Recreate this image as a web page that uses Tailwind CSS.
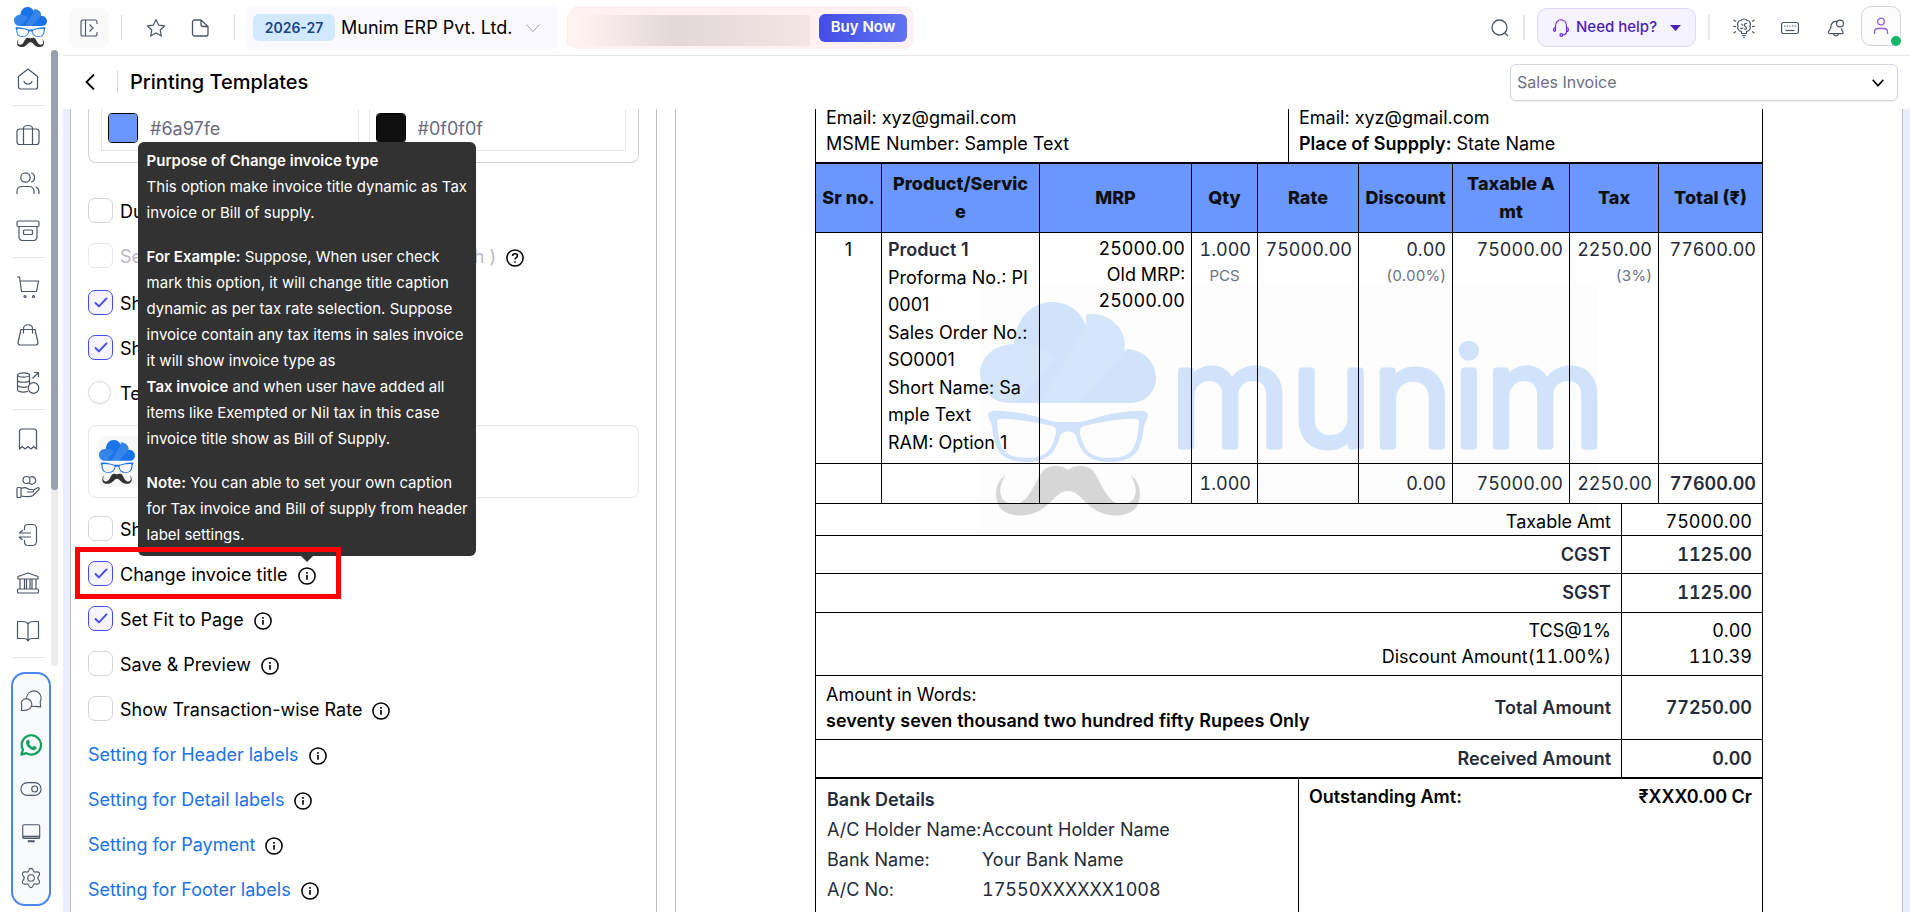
<!DOCTYPE html>
<html lang="en">
<head>
  <meta charset="UTF-8">
  <meta name="viewport" content="width=device-width, initial-scale=1.0">
  <title>Printing Templates - Munim ERP</title>
  <script src="https://cdn.jsdelivr.net/npm/@tailwindcss/browser@4"></script>
</head>
<body class="flex h-screen overflow-hidden bg-white font-['Inter',sans-serif] text-black">

  <!-- Shared symbols -->
  <svg class="hidden">
    <symbol id="cloud" viewBox="0 0 176 214">
      <path d="M30 101C12 101 0 88 0 71 0 56 14 42 34 42 36 16 52 0 72 0c16 0 29 9 34 24V13c6-2 15-1 22 3 14 8 19 21 16 34l3-3c17 1 29 13 29 29 0 15-12 25-26 25Z"/>
      <path fill="#fff" fill-opacity=".12" d="M34 42C14 42 0 56 0 71c0 17 12 30 30 30h6l38-44C64 46 50 40 34 42ZM106 24V13c6-2 15-1 22 3 14 8 19 21 16 34L98 101H60Z"/>
      <path fill-rule="evenodd" d="M8 114c0-5 3-5 10-5 27 0 46 9 58 11h24c12-2 31-11 58-11 7 0 10 0 10 5l-4 10c-2 23-8 36-34 36-22 0-30-10-34-26-2-6-14-6-16 0-4 16-12 26-34 26-26 0-32-13-34-36Zm9 6c2 24 5 36 29 36 16 0 24-5 28-18 3-8 3-12-2-14-12-3-27-6-44-7-8-1-11 0-11 3Zm142 0c-2 24-5 36-29 36-16 0-24-5-28-18-3-8-3-12 2-14 12-3 27-6 44-7 8-1 11 0 11 3Z"/>
    </symbol>
    <symbol id="moustache" viewBox="0 0 176 214">
      <path d="M88 168c-6-5-20-6-26 2-8 12-14 33-29 32-15-1-16-17-7-29-12 6-13 27-4 35 12 9 30 6 40-1 12-8 16-18 26-18s14 10 26 18c10 7 28 10 40 1 9-8 8-29-4-35 9 12 8 28-7 29-15 1-21-20-29-32-6-8-20-7-26-2Z"/>
    </symbol>
    <symbol id="info" viewBox="0 0 20 20" fill="none" stroke="currentColor">
      <circle cx="10" cy="10" r="9" stroke-width="1.700"/><path d="M10 9v5.200M10 5.600v1.800" stroke-width="1.800"/>
    </symbol>
    <symbol id="tick" viewBox="0 0 14 14" fill="none" stroke="currentColor">
      <path d="m1.500 7 3.400 3.400 7.600-8" stroke-width="1.900" stroke-linecap="round" stroke-linejoin="round"/>
    </symbol>
  </svg>

  <!-- Sidebar -->
  <aside class="w-[63px] shrink-0">
    <a href="#" aria-label="Munim" class="flex h-[50px] items-end pb-[3px] pl-3.5">
      <svg class="h-10 w-[33px]"><use href="#cloud" fill="#1a73e8"/><use href="#moustache" fill="#333"/></svg>
    </a>
    <div class="flex">
      <nav class="flex w-[51px] flex-col items-center pt-1.5 pb-0.5 pl-[5px] text-gray-600 [&_svg]:size-6 [&_svg]:fill-none [&_svg]:stroke-current [&_svg]:stroke-[1.2] [&>a]:flex [&>a]:h-12 [&>a]:items-center [&>a]:pb-0.5 [&>hr]:mt-px [&>hr]:mb-1.5 [&>hr]:w-[33px] [&>hr]:border-gray-200">
        <a href="#" aria-label="Home"><svg viewBox="0 0 24 24"><path d="M2.500 9.500 12 2l9.500 7.500V20a2 2 0 0 1-2 2h-15a2 2 0 0 1-2-2ZM8 14.500c1.500 3.500 6.500 3.500 8 0" stroke-linejoin="round" stroke-linecap="round"/></svg></a>
        <hr>
        <a href="#" aria-label="Products"><svg viewBox="0 0 24 24"><rect x="1" y="6" width="22" height="15.500" rx="2.500"/><path d="M7.500 21.500V5.500c0-4 9-4 9 0v16"/></svg></a>
        <a href="#" aria-label="Contacts"><svg viewBox="0 0 24 24"><circle cx="9.500" cy="6.500" r="4.700"/><path d="M1 22.500v-2c0-3 2-5 5-5h7c3 0 5 2 5 5v2M15.500 2c4 .5 4 8.500 0 9M20 16c2 1 3 2.500 3 4.500v2" stroke-linecap="round"/></svg></a>
        <a href="#" aria-label="Inventory"><svg viewBox="0 0 24 24"><rect x="1" y="2" width="22" height="5.500" rx="1.500"/><path d="M3 7.500V18a3.500 3.500 0 0 0 3.500 3.500h11A3.500 3.500 0 0 0 21 18V7.500"/><rect x="7.500" y="11" width="9" height="4.500" rx="1"/></svg></a>
        <hr>
        <a href="#" aria-label="Purchase"><svg viewBox="0 0 24 24"><path d="M1 2h2.500l2 14.500h15L22.500 6H4" stroke-linejoin="round"/><circle cx="9" cy="21.500" r="1"/><circle cx="17.500" cy="21.500" r="1"/></svg></a>
        <a href="#" aria-label="Sales"><svg viewBox="0 0 24 24"><path d="M5 6.500h14l3 13a2.500 2.500 0 0 1-2 2.500H4a2.500 2.500 0 0 1-2-2.500Z" stroke-linejoin="round"/><path d="M7.500 10V5.500c0-5 9-5 9 0V10" stroke-linecap="round"/></svg></a>
        <a href="#" aria-label="Expenses"><svg viewBox="0 0 24 24"><ellipse cx="7.500" cy="4" rx="6" ry="2.200"/><path d="M1.500 4v14.500c0 3 7 3 10.500 1.700M13.500 4v9M1.500 9c0 3 12 3 12 0M1.500 13.700c0 3 8 3 10 1.800"/><circle cx="17.500" cy="17" r="5.300"/><path d="m16.500 7.500 6-6M18 1.500h4.500V6"/></svg></a>
        <hr>
        <a href="#" aria-label="Receipt"><svg viewBox="0 0 24 24"><path d="M3.500 22V4.500A2.500 2.500 0 0 1 6 2h12a2.500 2.500 0 0 1 2.500 2.500V22l-2.800-2.500L15 22l-3-2.500L9 22l-2.800-2.500Z" stroke-linejoin="round"/></svg></a>
        <a href="#" aria-label="Payment"><svg viewBox="0 0 24 24"><circle cx="10.500" cy="5" r="3.500"/><path d="M14 2.200a3.700 3.700 0 1 1-1 5.500"/><rect x="1" y="12.500" width="4" height="10" rx="1"/><path d="M5 13.500c4-2 6-1 8 1h3.500c1.500 0 1.500 2.500 0 2.500H11M17 15.500l4-2.500c2-1 3 .5 1.500 2L17 20.500c-3 2-9 1-12 .5" stroke-linejoin="round"/></svg></a>
        <a href="#" aria-label="Entries"><svg viewBox="0 0 24 24"><path d="M8.500 7V5a3.500 3.500 0 0 1 3.500-3.500h4.500A4 4 0 0 1 20.500 5.500v13a4 4 0 0 1-4 4H12A3.500 3.500 0 0 1 8.500 19v-2M15 10H3.500L7 7M3 14h12M3 14l3.500 3" stroke-linejoin="round"/></svg></a>
        <a href="#" aria-label="Banking"><svg viewBox="0 0 24 24"><path d="M2 8V5.500L12 2l10 3.500V8Z" stroke-linejoin="round"/><path d="M4 8v10M8.500 8v10M10.500 8v10M14 8v10M16 8v10M20 8v10"/><rect x="1.500" y="18" width="21" height="4" rx="1"/></svg></a>
        <a href="#" aria-label="Reports"><svg viewBox="0 0 24 24"><path d="M12 22V5c-1-2-3-2.500-5-2.500H1.500v17H8c2 0 3 .5 4 2.500 1-2 2-2.500 4-2.500h6.500v-17H17c-2 0-4 .5-5 2.500" stroke-linejoin="round"/></svg></a>
        <hr>
      </nav>
      <div class="w-[7px] rounded-full bg-[#ececec]">
        <div class="h-[440px] rounded-full bg-gray-400"></div>
      </div>
    </div>
    <div class="mt-1.5 ml-[11px] flex h-[234px] w-10 flex-col items-center rounded-[14px] border-2 border-[#4a86f7] bg-slate-50 py-1 text-gray-600 [&_svg]:size-[22px] [&_svg]:fill-none [&_svg]:stroke-current [&_svg]:stroke-[1.2] [&>a]:flex [&>a]:flex-1 [&>a]:items-center">
      <a href="#" aria-label="Chat"><svg viewBox="0 0 24 24"><path d="M7 9.500C8 4 12 2 15 2c5 0 8 4 8 8 0 2-.5 3-1 4l.5 5.500L16 19c-1 .5-2 0-3.500-.5" stroke-linejoin="round"/><path d="M1.500 23.500 2 18.500C-.5 12 6 9 10 11.500c5 3.500 3 10.500-3 11.500Z" stroke-linejoin="round"/></svg></a>
      <a href="#" aria-label="WhatsApp" class="text-[#10a05c]"><svg viewBox="0 0 24 24"><path d="M1.500 22.500 3.200 17A10.500 10.500 0 1 1 7 20.900Z" stroke-width="2.400" stroke-linejoin="round"/><path fill="currentColor" stroke="none" d="M8.200 6.500c.5-.4 1.300-.3 1.600.3l.9 1.900c.3.800-.8 1.500-.8 1.900.7 1.600 2 2.800 3.800 3.500.5.100 1.200-1.300 1.800-1.100l2 1c1.600.8-.4 3.500-2.400 3.600-3.500 0-8.600-4.600-8.500-8.300 0-1.200.7-2.200 1.600-2.800Z"/></svg></a>
      <a href="#" aria-label="Toggle"><svg viewBox="0 0 24 24"><rect x="1" y="5" width="22" height="14" rx="7"/><circle cx="16" cy="12" r="3.200"/></svg></a>
      <a href="#" aria-label="Desktop"><svg viewBox="0 0 24 24"><rect x="3" y="3" width="18.500" height="15" rx="1.500"/><path d="M3 16h18.500M8.500 21h7.500" stroke-width="2"/></svg></a>
      <a href="#" aria-label="Settings"><svg viewBox="0 0 24 24"><circle cx="12" cy="12" r="3.600"/><path d="M12 1.500c1.800 0 2 1 2.500 2.500.5 1 1.500 1.700 2.700 1.500 2-.5 3-.5 4 1 .8 1.500.2 2.300-.9 3.500-.9 1-.9 3 0 4 1.100 1.200 1.700 2 .9 3.500-1 1.500-2 1.500-4 1-1.200-.2-2.200.5-2.700 1.500-.5 1.500-.7 2.500-2.500 2.500s-2-1-2.500-2.500c-.5-1-1.500-1.700-2.700-1.500-2 .5-3 .5-4-1-.8-1.500-.2-2.300.9-3.500.9-1 .9-3 0-4-1.100-1.200-1.700-2-.9-3.500 1-1.500 2-1.500 4-1 1.200.2 2.200-.5 2.700-1.500.5-1.500.7-2.500 2.500-2.500Z"/></svg></a>
    </div>
  </aside>

  <main class="flex min-w-0 flex-1 flex-col">
    <!-- Top bar -->
    <header class="flex h-14 shrink-0 items-center border-b border-gray-200 pr-[9px] pl-1.5 text-gray-600">
      <button aria-label="Expand menu" class="flex size-10 items-center justify-center rounded-lg bg-[#f9f9f9]">
        <svg class="size-[18px]" viewBox="0 0 18 18" fill="none" stroke="currentColor" stroke-width="1.100"><path d="M17 5V3a2 2 0 0 0-2-2H3a2 2 0 0 0-2 2v12a2 2 0 0 0 2 2h12a2 2 0 0 0 2-2v-2M5.500 1v16M9.500 5.500 13 9l-3.500 3.500"/></svg>
      </button>
      <span class="ml-3 h-[25px] w-px bg-gray-300"></span>
      <button aria-label="Favourites" class="ml-6"><svg class="size-5" viewBox="0 0 20 20" fill="none" stroke="currentColor" stroke-width="1.200" stroke-linejoin="round"><path d="m10 1.500 2.600 5.600 6.100.7-4.500 4.200 1.200 6.100L10 15.100l-5.400 3 1.200-6.100L1.300 7.800l6.100-.7Z"/></svg></button>
      <button aria-label="New document" class="ml-6"><svg class="size-5" viewBox="0 0 20 20" fill="none" stroke="currentColor" stroke-width="1.300" stroke-linejoin="round"><path d="M4.500 2H11l7 6.500V16a2 2 0 0 1-2 2H4.500a2 2 0 0 1-2-2V4a2 2 0 0 1 2-2ZM11 2v4.500a2 2 0 0 0 2 2h5"/></svg></button>
      <span class="ml-6 h-[25px] w-px bg-gray-300"></span>
      <button class="ml-3 flex h-[43px] w-[311px] items-center rounded-md bg-[#faf9ff] pl-1.5 text-lg text-black">
        <span class="flex h-[27px] w-[82px] items-center justify-center rounded-md bg-[#d1e9ff] text-sm font-semibold text-[#194185]">2026-27</span>
        <span class="ml-1.5">Munim ERP Pvt. Ltd.</span>
        <svg class="ml-auto mr-[18px] h-2 w-3.5 text-gray-400" viewBox="0 0 14 8" fill="none" stroke="currentColor"><path d="m.5.5 6.500 7 6.500-7"/></svg>
      </button>
      <div class="relative ml-3 flex h-[43px] w-[343px] items-center justify-end rounded-lg bg-[#fff1f1] pr-1.5">
        <span class="absolute top-[9px] -left-1 h-[31px] w-[244px] bg-linear-to-r from-[#fff3f2] via-[#e1d8d7] to-[#f3e6e5] from-5% via-45%"></span>
        <button class="h-7 w-[88px] rounded-md bg-linear-to-r from-[#444ce7] to-[#6172f3] text-[15px] font-semibold text-white">Buy Now</button>
      </div>

      <button aria-label="Search" class="ml-auto"><svg class="size-[18px]" viewBox="0 0 18 18" fill="none" stroke="currentColor" stroke-width="1.300"><circle cx="8.500" cy="8.500" r="7.500"/><path d="m14 14 3 3"/></svg></button>
      <span class="ml-3.5 h-[25px] w-0.5 bg-gray-200"></span>
      <button class="ml-3 flex h-[39px] w-[159px] items-center rounded-[10px] border border-violet-200 bg-[#f5f3ff] px-3.5 text-[15px] font-medium text-[#4a1fb8]">
        <svg class="size-[18px]" viewBox="0 0 18 18" fill="none" stroke="#6d28d9" stroke-width="1.200"><path d="M3.500 12V7.500c0-9 11-9 11 0V12c0 2.500-1.500 4-4 4M3.500 8.500C1 8.500 1 12.500 3.500 12.500M14.500 8.500c2.500 0 2.500 4 0 4"/><circle cx="9.300" cy="16" r="1.300"/></svg>
        <span class="ml-1.5">Need help?</span>
        <svg class="ml-auto h-1.5 w-[11px]" viewBox="0 0 11 6" fill="currentColor"><path d="M0 0h11L5.500 6Z"/></svg>
      </button>
      <span class="ml-3 h-[25px] w-0.5 bg-gray-200"></span>
      <button aria-label="Ideas" class="ml-[23px]"><svg class="size-[22px]" viewBox="0 0 22 22" fill="none" stroke="currentColor" stroke-width="1.200"><path d="M8.500 16.500v-2C5 14 4 11 5 9 3.500 6 6 3.500 8 3.500c1-2 5-2 6 0 2 0 4.500 2.500 3 5.500 1 2 0 5-3.500 5.500v2ZM9 18.500h4M10 20.500h2M8 7c1 0 1.500.5 2 1.500M14 6.500c-1.500-.5-3 .5-2.500 2s2 1 2 2.500-1.500 1.500-2.500 1M7.500 11c1 1 2 .5 2.500-.5"/><path d="m.5 3 2.500 1.500M0 9.500h3M.5 16 3 14.500M21.500 3 19 4.500M22 9.500h-3M21.500 16 19 14.500"/></svg></button>
      <button aria-label="Shortcuts" class="ml-[26px]"><svg class="h-3.5 w-[18px]" viewBox="0 0 18 14" fill="none" stroke="currentColor" stroke-width="1.200"><rect x=".6" y="1.500" width="16.800" height="11" rx="1.800"/><path d="M4.500 9.500h9"/><path d="M3.200 5h12" stroke-dasharray="1.300 1.300"/></svg></button>
      <button aria-label="Notifications" class="ml-7"><svg class="size-[18px]" viewBox="0 0 18 18" fill="none" stroke="currentColor" stroke-width="1.200"><path d="M10 2.500C6 2 4 4.500 4 7.500c0 3-2.500 3.500-2.500 6 0 1 1 1.200 2 1.200h11c1 0 1.800-.5 1.500-1.500-.3-1.200-1.500-1.500-1.500-4M6.500 15c.5 2.500 4.500 2.500 5 0"/><circle cx="13" cy="4.500" r="3.400"/></svg></button>
      <button aria-label="Account" class="relative mb-1 ml-4 flex size-10 items-center justify-center rounded-[10px] border border-gray-300 bg-[#fcfcfd]">
        <svg class="size-[18px]" viewBox="0 0 18 18" fill="none" stroke="#9061d8" stroke-width="1.300"><circle cx="9" cy="4.500" r="3.300"/><path d="M2.500 17v-2c0-2 1.500-3.500 3.500-3.500h6c2 0 3.500 1.500 3.500 3.500v2"/></svg>
        <span class="absolute -right-px -bottom-px size-2.5 rounded-full bg-[#12b76a]"></span>
      </button>
    </header>

    <!-- Page heading -->
    <div class="flex h-[53px] shrink-0 items-center pr-3 pb-px pl-[22px]">
      <button aria-label="Back"><svg class="h-4 w-2.5" viewBox="0 0 10 16" fill="none" stroke="currentColor" stroke-width="1.800"><path d="M9 .5 1.500 8 9 15.500"/></svg></button>
      <span class="ml-[22px] h-[22px] w-px bg-gray-300"></span>
      <h1 class="ml-3 text-xl font-medium">Printing Templates</h1>
      <div class="relative ml-auto">
        <label for="template" class="sr-only">Template</label>
        <select id="template" class="h-[37px] w-[388px] appearance-none rounded-md border border-[#d5d3e0] bg-white pl-1.5 text-base text-[#6b6f80] shadow-xs">
          <option>Sales Invoice</option>
        </select>
        <svg class="pointer-events-none absolute top-[15px] right-3.5 h-2 w-3" viewBox="0 0 12 8" fill="none" stroke="currentColor" stroke-width="1.600"><path d="m.7.700 5.300 6 5.300-6"/></svg>
      </div>
    </div>

    <div class="flex min-h-0 flex-1 bg-[#e8eefc] px-[7px]">
      <!-- Template settings -->
      <section class="w-[587px] shrink-0 border-x border-[#bdbdbd] bg-white px-[17px] text-lg/[26px]">
        <div class="flex gap-2.5 rounded-b-lg border-x border-b border-[#d0d0dc] px-3 pb-[11px]">
          <div class="flex h-[42px] flex-1 items-start border-x border-b border-gray-200 pt-1 pl-1.5">
            <input type="color" value="#6a97fe" aria-label="Background colour" class="size-[30px] appearance-none overflow-hidden rounded-[4px] border border-black [&::-webkit-color-swatch-wrapper]:p-0 [&::-webkit-color-swatch]:border-0">
            <input type="text" value="#6a97fe" aria-label="Background colour code" class="ml-3 h-[30px] w-40 text-[#6b6b80]">
          </div>
          <div class="flex h-[42px] flex-1 items-start border-x border-b border-gray-200 pt-1 pl-1.5">
            <input type="color" value="#0f0f0f" aria-label="Text colour" class="size-[30px] appearance-none overflow-hidden rounded-[4px] border border-black [&::-webkit-color-swatch-wrapper]:p-0 [&::-webkit-color-swatch]:border-0">
            <input type="text" value="#0f0f0f" aria-label="Text colour code" class="ml-3 h-[30px] w-40 text-[#6b6b80]">
          </div>
        </div>

        <div class="mt-[25px] flex h-[45px] items-center">
          <input id="duplicate" type="checkbox" class="size-[25px] appearance-none rounded-[7px] border border-gray-300">
          <label for="duplicate" class="ml-[7px] pt-0.5">Duplicate</label>
        </div>
        <div class="flex h-[45px] items-center">
          <input id="footer" type="checkbox" disabled class="size-[25px] appearance-none rounded-[7px] border border-gray-200">
          <label for="footer" class="ml-[7px] flex w-[376px] justify-between pt-0.5 text-[#b9b9c6]"><span>Set Footer Image</span><span>( Max Width )</span></label>
          <svg class="mt-1 ml-2.5 size-[18px]" viewBox="0 0 20 20" fill="none" stroke="currentColor" stroke-width="1.700"><circle cx="10" cy="10" r="9"/><path d="M7.300 7.800c.2-3.400 5.500-3 5.400 0 0 1.900-2.700 1.900-2.700 3.800M10 13.500v1.700"/></svg>
        </div>
        <div class="mt-0.5 flex h-[45px] items-center">
          <div class="grid place-items-center text-[#444ce7]">
            <input id="show-logo" type="checkbox" checked class="peer size-[25px] appearance-none rounded-[7px] border border-gray-300 [grid-area:1/1] checked:border-[#444ce7] checked:bg-[#f6f4ff]">
            <svg class="pointer-events-none hidden size-3.5 [grid-area:1/1] peer-checked:block"><use href="#tick"/></svg>
          </div>
          <label for="show-logo" class="ml-[7px] pt-0.5">Show Logo</label>
        </div>
        <div class="flex h-[45px] items-center">
          <div class="grid place-items-center text-[#444ce7]">
            <input id="show-watermark" type="checkbox" checked class="peer size-[25px] appearance-none rounded-[7px] border border-gray-300 [grid-area:1/1] checked:border-[#444ce7] checked:bg-[#f6f4ff]">
            <svg class="pointer-events-none hidden size-3.5 [grid-area:1/1] peer-checked:block"><use href="#tick"/></svg>
          </div>
          <label for="show-watermark" class="ml-[7px] pt-0.5">Show Watermark</label>
        </div>
        <div class="flex h-[45px] items-center">
          <input id="text" type="radio" class="size-[23px] appearance-none rounded-full border border-gray-300 shadow-xs">
          <label for="text" class="ml-[9px] pt-0.5">Text</label>
        </div>
        <div class="mt-2.5 h-[73px] rounded-lg border border-gray-200 p-2.5">
          <div class="flex h-[51px] w-16 items-center rounded-md bg-[#f7f7f7]">
            <svg class="h-11 w-9"><use href="#cloud" fill="#1a73e8"/><use href="#moustache" fill="#333"/></svg>
          </div>
        </div>
        <div class="mt-2 flex h-[45px] items-center">
          <input id="show-sign" type="checkbox" class="size-[25px] appearance-none rounded-[7px] border border-gray-300">
          <label for="show-sign" class="ml-[7px] pt-0.5">Show Signature</label>
        </div>
        <div class="relative flex h-[45px] items-center">
          <div class="grid place-items-center text-[#444ce7]">
            <input id="change-title" type="checkbox" checked class="peer size-[25px] appearance-none rounded-[7px] border border-gray-300 [grid-area:1/1] checked:border-[#444ce7] checked:bg-[#f6f4ff]">
            <svg class="pointer-events-none hidden size-3.5 [grid-area:1/1] peer-checked:block"><use href="#tick"/></svg>
          </div>
          <label for="change-title" class="ml-[7px] pt-0.5">Change invoice title</label>
          <div class="relative mt-1 ml-2.5">
            <svg class="size-[18px]"><use href="#info"/></svg>
            <div role="tooltip" class="absolute bottom-full left-1/2 mb-[11px] w-[338px] -translate-x-1/2 rounded-md bg-[#323232] px-[9px] pt-1.5 pb-2 text-[15px]/[26px] whitespace-nowrap text-white">
              <p><b class="font-semibold">Purpose of Change invoice type</b><br>This option make invoice title dynamic as Tax<br>invoice or Bill of supply.</p>
              <p class="mt-[18px]"><b class="font-semibold">For Example:</b> Suppose, When user check<br>mark this option, it will change title caption<br>dynamic as per tax rate selection. Suppose<br>invoice contain any tax items in sales invoice<br>it will show invoice type as<br><b class="font-semibold">Tax invoice</b> and when user have added all<br>items like Exempted or Nil tax in this case<br>invoice title show as Bill of Supply.</p>
              <p class="mt-[18px]"><b class="font-semibold">Note:</b> You can able to set your own caption<br>for Tax invoice and Bill of supply from header<br>label settings.</p>
              <span class="absolute top-full left-1/2 -translate-x-1/2 border-x-[6px] border-t-[6px] border-x-transparent border-t-[#323232]"></span>
            </div>
          </div>
          <!-- Highlight -->
          <div class="pointer-events-none absolute -top-1 -left-[13px] h-[52px] w-[266px] border-[5px] border-[#fe0000]"></div>
        </div>
        <div class="flex h-[45px] items-center">
          <div class="grid place-items-center text-[#444ce7]">
            <input id="fit-page" type="checkbox" checked class="peer size-[25px] appearance-none rounded-[7px] border border-gray-300 [grid-area:1/1] checked:border-[#444ce7] checked:bg-[#f6f4ff]">
            <svg class="pointer-events-none hidden size-3.5 [grid-area:1/1] peer-checked:block"><use href="#tick"/></svg>
          </div>
          <label for="fit-page" class="ml-[7px] pt-0.5">Set Fit to Page</label>
          <svg class="mt-1 ml-2.5 size-[18px]"><use href="#info"/></svg>
        </div>
        <div class="flex h-[45px] items-center">
          <input id="save-preview" type="checkbox" class="size-[25px] appearance-none rounded-[7px] border border-gray-300">
          <label for="save-preview" class="ml-[7px] pt-0.5">Save &amp; Preview</label>
          <svg class="mt-1 ml-2.5 size-[18px]"><use href="#info"/></svg>
        </div>
        <div class="flex h-[45px] items-center">
          <input id="transaction-rate" type="checkbox" class="size-[25px] appearance-none rounded-[7px] border border-gray-300">
          <label for="transaction-rate" class="ml-[7px] pt-0.5">Show Transaction-wise Rate</label>
          <svg class="mt-1 ml-2.5 size-[18px]"><use href="#info"/></svg>
        </div>
        <div class="flex h-[45px] items-center">
          <a href="#" class="pt-0.5 text-[#1a73e8]">Setting for Header labels</a>
          <svg class="mt-1 ml-2.5 size-[18px]"><use href="#info"/></svg>
        </div>
        <div class="flex h-[45px] items-center">
          <a href="#" class="pt-0.5 text-[#1a73e8]">Setting for Detail labels</a>
          <svg class="mt-1 ml-2.5 size-[18px]"><use href="#info"/></svg>
        </div>
        <div class="flex h-[45px] items-center">
          <a href="#" class="pt-0.5 text-[#1a73e8]">Setting for Payment</a>
          <svg class="mt-1 ml-2.5 size-[18px]"><use href="#info"/></svg>
        </div>
        <div class="flex h-[45px] items-center">
          <a href="#" class="pt-0.5 text-[#1a73e8]">Setting for Footer labels</a>
          <svg class="mt-1 ml-2.5 size-[18px]"><use href="#info"/></svg>
        </div>
      </section>
      <div class="w-[18px] shrink-0 bg-white"></div>

      <!-- Invoice preview -->
      <section class="min-w-0 flex-1 overflow-hidden border-x border-[#bdbdbd] bg-white">
        <div class="relative isolate mx-auto w-[948px] border-x border-black text-lg/[26px]">
          <svg class="absolute top-[173px] left-[164px] -z-10 h-[253px] w-[618px] bg-[#fdfdfd]" viewBox="0 0 618 253">
            <use href="#cloud" y="20" width="176" height="214" fill="#d1e3fa"/>
            <use href="#moustache" y="20" width="176" height="214" fill="#d6d6d6"/>
            <text x="190" y="164" font-size="138" font-weight="300" fill="#d1e3fa" stroke="#d1e3fa" stroke-width="7" stroke-linejoin="round">munim</text>
          </svg>

          <div class="flex border-b-2 border-black">
            <div class="w-[473px] border-r border-black pb-[5px] pl-2.5">
              <p class="-mt-1">Email: xyz@gmail.com</p>
              <p>MSME Number: Sample Text</p>
            </div>
            <div class="flex-1 pl-2.5">
              <p class="-mt-1">Email: xyz@gmail.com</p>
              <p><b class="font-semibold">Place of Suppply:</b> State Name</p>
            </div>
          </div>

          <table class="w-full table-fixed border-separate border-spacing-0 text-right text-[#262b38] [&_td]:border-r [&_td]:border-b [&_td]:border-black [&_td]:px-1.5 [&_td:last-child]:border-r-0 [&_th]:border-r [&_th]:border-b [&_th]:border-black [&_th:last-child]:border-r-0">
            <colgroup><col class="w-[66px]"><col class="w-[158px]"><col class="w-[152px]"><col class="w-[66px]"><col class="w-[101px]"><col class="w-[94px]"><col class="w-[117px]"><col class="w-[89px]"><col></colgroup>
            <thead>
              <tr class="h-[69px] bg-[#6a97fe] text-center text-lg/[28px] text-[#0f0f0f] [&>th]:font-extrabold">
                <th>Sr no.</th><th>Product/Servic<br>e</th><th>MRP</th><th>Qty</th><th>Rate</th><th>Discount</th><th>Taxable A<br>mt</th><th>Tax</th><th>Total (₹)</th>
              </tr>
            </thead>
            <tbody>
              <tr class="h-[231px] align-top leading-[27px] [&>td]:pt-[3px]">
                <td class="text-center text-black">1</td>
                <td class="space-y-px text-left text-black">
                  <p class="font-semibold text-[#262b38]">Product 1</p>
                  <p>Proforma No.: PI<br>0001</p>
                  <p>Sales Order No.:<br>SO0001</p>
                  <p>Short Name: Sa<br>mple Text</p>
                  <p>RAM: Option 1</p>
                </td>
                <td class="leading-[26px] text-black tabular-nums">25000.00<br>Old MRP:<br>25000.00</td>
                <td class="tabular-nums">1.000<p class="text-center text-[15px]/[26px] text-gray-500">PCS</p></td>
                <td class="tabular-nums">75000.00</td>
                <td class="tabular-nums">0.00<p class="text-[15px]/[26px] text-gray-500">(0.00%)</p></td>
                <td class="tabular-nums">75000.00</td>
                <td class="tabular-nums">2250.00<p class="text-[15px]/[26px] text-gray-500">(3%)</p></td>
                <td class="tabular-nums">77600.00</td>
              </tr>
              <tr class="h-10 tabular-nums">
                <td></td><td></td><td></td><td>1.000</td><td></td><td>0.00</td><td>75000.00</td><td>2250.00</td><td class="font-semibold">77600.00</td>
              </tr>
            </tbody>
          </table>

          <table class="w-full table-fixed border-separate border-spacing-0 text-right tabular-nums [&_td]:border-b [&_td]:border-black [&_td]:px-2.5 [&_td:last-child]:border-l">
            <colgroup><col class="w-[470px]"><col><col class="w-[141px]"></colgroup>
            <tbody>
              <tr class="h-8 [&>td]:pt-1"><td colspan="2">Taxable Amt</td><td>75000.00</td></tr>
              <tr class="h-[38px] font-semibold text-[#262b38]"><td colspan="2">CGST</td><td>1125.00</td></tr>
              <tr class="h-[39px] font-semibold text-[#262b38]"><td colspan="2">SGST</td><td>1125.00</td></tr>
              <tr class="h-[63px]"><td colspan="2">TCS@1%<br>Discount Amount(11.00%)</td><td>0.00<br>110.39</td></tr>
              <tr class="h-16 font-semibold text-[#262b38]">
                <td colspan="2">
                  <div class="flex items-center justify-between">
                    <p class="text-left font-normal text-black">Amount in Words:<br><b class="font-semibold">seventy seven thousand two hundred fifty Rupees Only</b></p>
                    <span>Total Amount</span>
                  </div>
                </td>
                <td>77250.00</td>
              </tr>
              <tr class="h-[39px] font-semibold text-[#262b38] [&>td]:border-b-2"><td colspan="2">Received Amount</td><td>0.00</td></tr>
            </tbody>
          </table>

          <div class="flex h-[180px]">
            <div class="w-[483px] border-r border-black pt-1.5 pl-[11px] leading-[30px] text-[#262b38]">
              <h2 class="font-semibold">Bank Details</h2>
              <dl class="grid grid-cols-[155px_1fr]">
                <dt class="whitespace-nowrap">A/C Holder Name:</dt><dd>Account Holder Name</dd>
                <dt>Bank Name:</dt><dd>Your Bank Name</dd>
                <dt>A/C No:</dt><dd class="tabular-nums">17550XXXXXX1008</dd>
              </dl>
            </div>
            <div class="flex flex-1 justify-between px-2.5 pt-[5px] font-semibold">
              <span>Outstanding Amt:</span><span>₹XXX0.00 Cr</span>
            </div>
          </div>
        </div>
      </section>
    </div>
  </main>
</body>
</html>
